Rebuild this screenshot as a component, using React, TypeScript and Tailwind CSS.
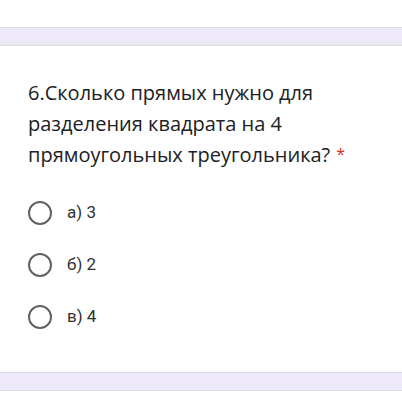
import React from 'react';

const options = ['а) 3', 'б) 2', 'в) 4'];

const Radio = () => (
    <div className="w-[24px] h-[24px] rounded-full border-[2.5px] border-[#5f6368] shrink-0" />
);

export default function App() {
    return (
        <div className="w-[402px] h-[402px] overflow-hidden bg-[#ede9f8] font-['Roboto',sans-serif]">
            <div className="h-[28px] bg-white border-b border-[#dadce0]" />
            <div className="h-[17px]" />
            <div className="bg-white border-y border-[#dadce0] h-[328px] pl-[28px] pr-4 pt-[31px]">
                <h2 className="font-['Open_Sans',sans-serif] text-[20px] leading-[31px] text-[#202124]">
                    6.Сколько прямых нужно для разделения квадрата на 4 прямоугольных треугольника?
                    <span className="text-[#d93025] text-[16px] ml-[6px] align-top">*</span>
                </h2>
                <div className="mt-[31px] flex flex-col gap-[28px]">
                    {options.map((opt) => (
                        <div key={opt} className="flex items-center gap-[15px] h-[24px]">
                            <Radio />
                            <span className="text-[17px] text-[#303134]">{opt}</span>
                        </div>
                    ))}
                </div>
            </div>
            <div className="h-[17px]" />
            <div className="h-[12px] bg-white border-t border-[#dadce0]" />
        </div>
    );
}
